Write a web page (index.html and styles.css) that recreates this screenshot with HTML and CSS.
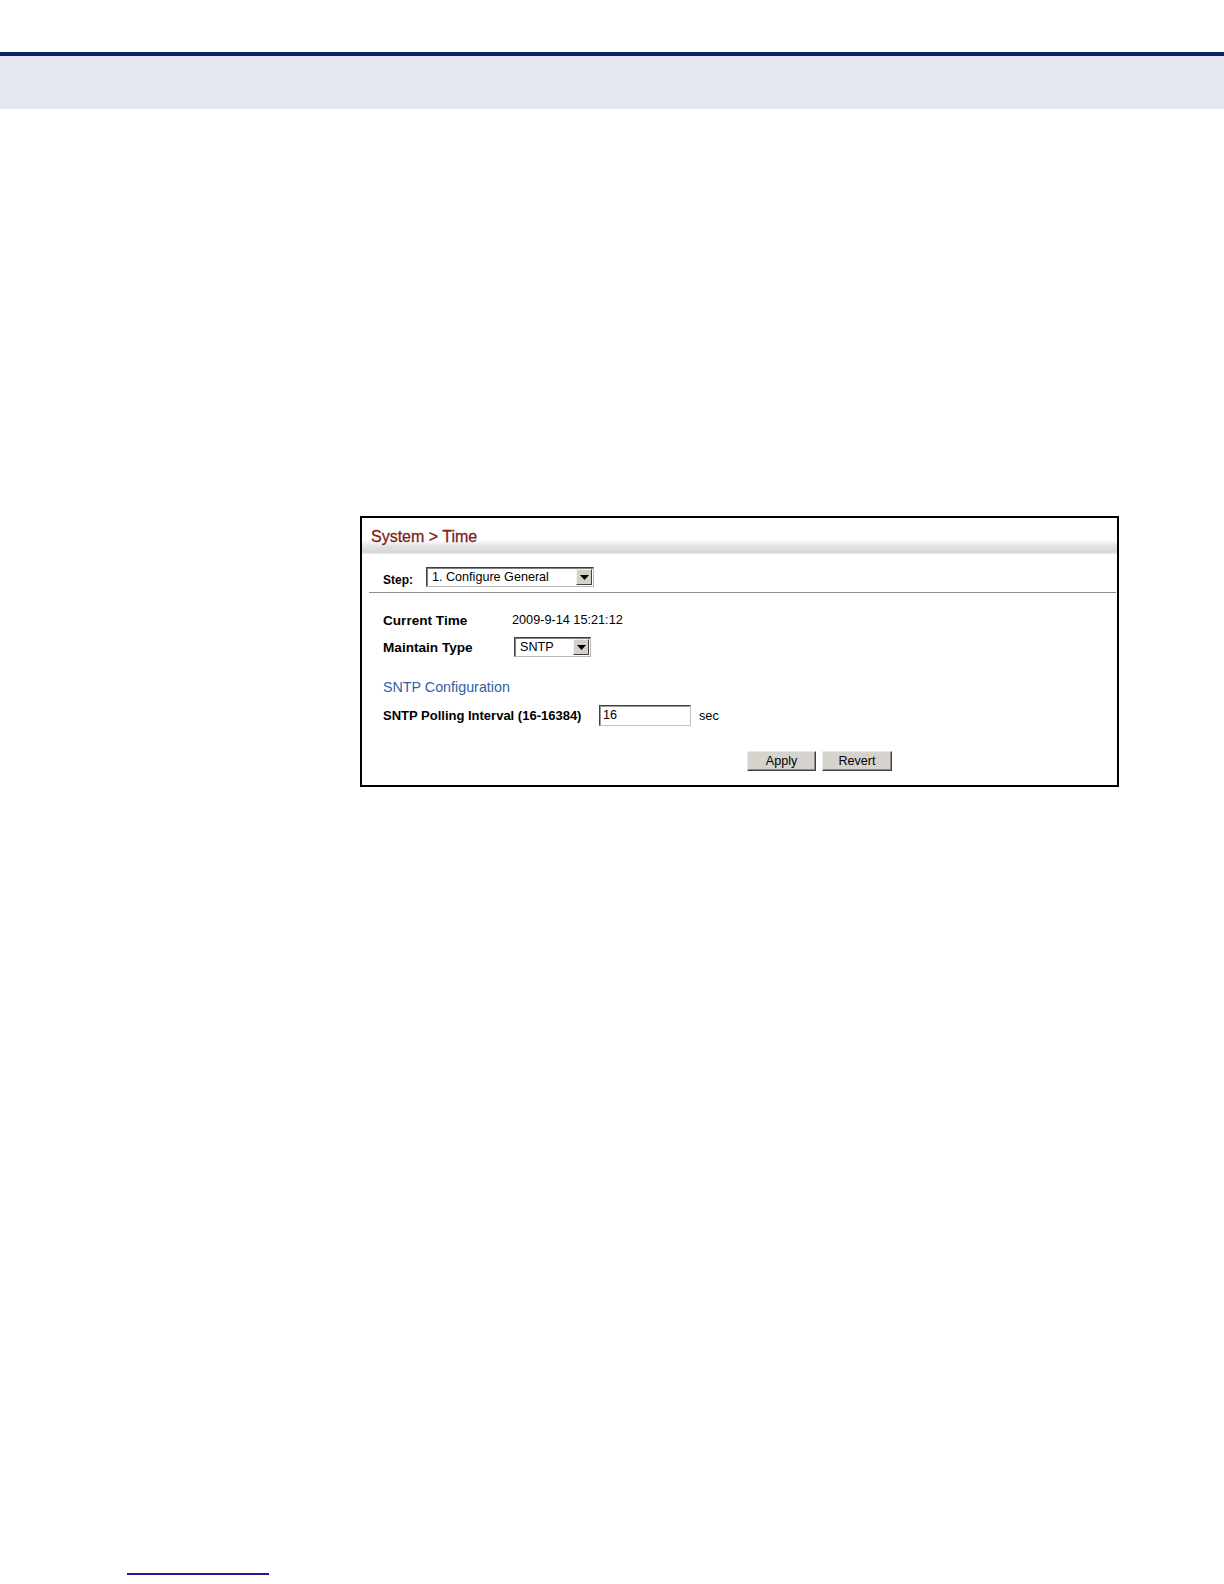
FILE: index.html
```html
<!DOCTYPE html>
<html lang="en">
<head>
<meta charset="utf-8">
<title>System &gt; Time</title>
<link rel="stylesheet" href="styles.css">
</head>
<body>
<header class="page-head">
  <div class="head-rule"></div>
  <div class="head-band"></div>
</header>

<main class="content">
  <section class="panel">
    <div class="panel-title">System &gt; Time</div>
    <div class="step-row">
      <span class="step-label">Step:</span>
      <div class="fake-select step-select">
        <span class="fs-text">1. Configure General</span>
        <span class="fs-btn"><svg width="9" height="5" viewBox="0 0 9 5"><path d="M0 0H9L4.5 5Z" fill="#000"/></svg></span>
      </div>
    </div>
    <div class="form">
      <div class="row r-time">
        <span class="lbl">Current Time</span>
        <span class="val">2009-9-14 15:21:12</span>
      </div>
      <div class="row r-type">
        <span class="lbl">Maintain Type</span>
        <div class="fake-select type-select">
          <span class="fs-text">SNTP</span>
          <span class="fs-btn"><svg width="9" height="5" viewBox="0 0 9 5"><path d="M0 0H9L4.5 5Z" fill="#000"/></svg></span>
        </div>
      </div>
      <div class="sub-head">SNTP Configuration</div>
      <div class="row r-poll">
        <span class="lbl lbl-wide">SNTP Polling Interval (16-16384)</span>
        <div class="fake-input">16</div>
        <span class="unit">sec</span>
      </div>
      <div class="actions">
        <span class="btn btn-apply">Apply</span>
        <span class="btn btn-revert">Revert</span>
      </div>
    </div>
  </section>
  <div class="foot-rule"></div>
</main>
</body>
</html>
```

FILE: styles.css
```css
html, body {
  margin: 0;
  padding: 0;
  background: #ffffff;
}
body {
  font-family: "Liberation Sans", Arial, sans-serif;
  color: #000;
}
.page-head {
  padding-top: 52px;
}
.head-rule {
  height: 4px;
  background: #0b2466;
}
.head-band {
  height: 53px;
  background: #e5e8f0;
}
.content {
  padding-top: 407px;
  padding-bottom: 8px;
}
.panel {
  margin-left: 360px;
  width: 755px;
  border: 2px solid #000;
  background: #fff;
}
.panel-title {
  box-sizing: border-box;
  height: 36px;
  padding-top: 7px;
  padding-left: 9px;
  line-height: 24px;
  font-size: 16px;
  color: #7e1d1d;
  -webkit-text-stroke: 0.3px #7e1d1d;
  background: linear-gradient(to bottom, #ffffff 0, #ffffff 22px, #e4e4e4 28px, #d6d6d6 34px, #ececec 36px);
}
.step-row {
  display: flex;
  align-items: flex-end;
  margin: 0 1px 0 7px;
  padding: 13px 0 5px 14px;
  border-bottom: 1px solid #8c8c8c;
}
.step-label {
  font-size: 12px;
  font-weight: bold;
  line-height: 14px;
  width: 43px;
}
.fake-select {
  display: flex;
  align-items: center;
  justify-content: space-between;
  box-sizing: border-box;
  height: 20px;
  border-top: 1px solid #404040;
  border-left: 1px solid #404040;
  border-right: 1px solid #b8b8b8;
  border-bottom: 1px solid #b8b8b8;
  box-shadow: inset 1px 1px 0 #808080;
  background: #fff;
  font-size: 12.6px;
  padding: 0 1px 0 5px;
}
.step-select {
  width: 168px;
}
.type-select {
  width: 77px;
}
.fs-btn {
  display: flex;
  align-items: center;
  justify-content: center;
  box-sizing: border-box;
  width: 16px;
  height: 16px;
  background: #d4d0c8;
  border-top: 1px solid #f4f4f4;
  border-left: 1px solid #f4f4f4;
  border-right: 1px solid #404040;
  border-bottom: 1px solid #404040;
}
.form {
  padding: 18px 0 14px 21px;
}
.row {
  display: flex;
  align-items: center;
}
.lbl {
  font-size: 13px;
  font-weight: bold;
  width: 129px;
  flex: none;
}
.r-time .lbl,
.r-type .lbl {
  font-size: 13.6px;
}
.lbl-wide {
  width: 216px;
}
.val {
  font-size: 12.7px;
}
.r-time {
  height: 18px;
}
.r-type {
  margin-top: 8px;
  height: 20px;
}
.r-type .fake-select {
  margin-left: 2px;
}
.sub-head {
  margin-top: 20px;
  height: 20px;
  line-height: 20px;
  font-size: 14.3px;
  color: #2f5fa6;
}
.r-poll {
  margin-top: 8px;
  height: 21px;
}
.fake-input {
  box-sizing: border-box;
  width: 92px;
  height: 21px;
  line-height: 18px;
  padding-left: 3px;
  font-size: 12.6px;
  border-top: 1px solid #404040;
  border-left: 1px solid #404040;
  border-right: 1px solid #c0c0c0;
  border-bottom: 1px solid #c0c0c0;
  box-shadow: inset 1px 1px 0 #9a9a9a;
}
.unit {
  margin-left: 8px;
  font-size: 12.7px;
}
.actions {
  display: flex;
  gap: 6px;
  margin-top: 25px;
  margin-left: 364px;
}
.btn {
  box-sizing: border-box;
  height: 20px;
  line-height: 18px;
  text-align: center;
  font-size: 12.6px;
  background: #d6d3ce;
  border-top: 1px solid #ebe9e5;
  border-left: 1px solid #ebe9e5;
  border-right: 1px solid #404040;
  border-bottom: 1px solid #404040;
  box-shadow: inset -1px -1px 0 #8e8c88;
}
.btn-apply {
  width: 69px;
}
.btn-revert {
  width: 70px;
}
.foot-rule {
  margin-top: 786px;
  margin-left: 127px;
  width: 142px;
  height: 2px;
  background: #1c1c8c;
}
```
